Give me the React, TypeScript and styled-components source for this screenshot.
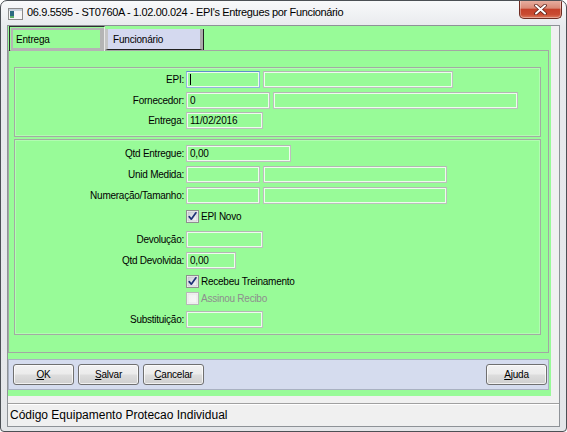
import React from "react";
import styled, { createGlobalStyle } from "styled-components";

const GREEN = "#98fb98";

const Global = createGlobalStyle`
  html, body { margin: 0; padding: 0; background: #ffffff; }
  body { width: 567px; height: 432px; overflow: hidden; font-family: "Liberation Sans", Arial, sans-serif; color: #000; }
  * { box-sizing: border-box; }
`;

const Window = styled.div`
  width: 567px;
  height: 432px;
  border: 1px solid #4c5055;
  border-radius: 7px 7px 4px 4px;
  background: linear-gradient(to bottom, #f8f9fa 0px, #e8eaed 26px, #e4e6e9 100%);
  display: flex;
  flex-direction: column;
  overflow: hidden;
`;

const TitleBar = styled.div`
  height: 24px;
  flex-shrink: 0;
  display: flex;
  align-items: flex-start;
  padding-left: 7px;
`;

const AppIcon = styled.svg`
  margin-top: 7px;
  flex-shrink: 0;
`;

const Title = styled.div`
  margin-left: 4px;
  margin-top: 5px;
  font-size: 11px;
  letter-spacing: -0.35px;
  white-space: nowrap;
  color: #000;
`;

const CloseButton = styled.div`
  margin-left: auto;
  margin-right: 4px;
  margin-top: -1px;
  width: 43px;
  height: 19px;
  border: 1px solid #6e2c22;
  border-top: none;
  border-radius: 0 0 5px 5px;
  background: linear-gradient(to bottom, #e9b2a4 0%, #d98a77 45%, #c5412a 52%, #c94b31 80%, #dc7a5f 100%);
  box-shadow: inset 0 0 0 1px rgba(255, 255, 255, 0.35);
  display: flex;
  align-items: center;
  justify-content: center;
`;

const Client = styled.div`
  margin: 0 6px 4px 6px;
  flex: 1;
  min-height: 0;
  border: 1px solid #8e9297;
  background: #f0f0f0;
  display: flex;
  flex-direction: column;
`;

const GreenArea = styled.div`
  width: 543px;
  height: 370px;
  flex-shrink: 0;
  background: ${GREEN};
  display: flex;
  flex-direction: column;
`;

const TabStrip = styled.div`
  height: 24px;
  display: flex;
  align-items: flex-start;
  padding-left: 1px;
`;

const ActiveTab = styled.div`
  width: 96px;
  height: 25px;
  border-left: 1px solid #2f2f2f;
  border-top: 1px solid #2f2f2f;
  border-right: 1px solid #e8e8e8;
  padding: 1px 0 0 1px;
  position: relative;
  z-index: 1;
`;

const ActiveTabFace = styled.div`
  height: 100%;
  border: 2px solid #b4b4b4;
  border-right-width: 4px;
  border-bottom-width: 3px;
  background: ${GREEN};
  font-size: 10px;
  letter-spacing: -0.2px;
  padding-left: 3px;
  display: flex;
  align-items: center;
`;

const Tab = styled.div`
  margin-top: 3px;
  width: 98px;
  height: 21px;
  background: #d4d9ef;
  border-left: 3px solid #c4c4c4;
  border-right: 3px solid #aaaaaa;
  border-bottom: 1px solid #202020;
  box-shadow: 1px 0 0 #202020;
  font-size: 10px;
  letter-spacing: -0.2px;
  padding-left: 5px;
  display: flex;
  align-items: center;
`;

const Page = styled.div`
  width: 541px;
  height: 303px;
  border: 1px solid #a3a7a3;
  padding: 16px 7px 0 5px;
  display: flex;
  flex-direction: column;
  gap: 2px;
`;

const Group = styled.div<{ $h: number; $pt: number }>`
  height: ${(p) => p.$h}px;
  border: 1px solid #a3aaa3;
  box-shadow: inset 0 0 0 1px rgba(255, 255, 255, 0.25);
  padding-top: ${(p) => p.$pt}px;
  display: flex;
  flex-direction: column;
`;

const Row = styled.div<{ $mt: number }>`
  height: 17px;
  margin-top: ${(p) => p.$mt}px;
  display: flex;
  align-items: center;
`;

const Label = styled.div`
  width: 169px;
  margin-right: 2px;
  text-align: right;
  font-size: 10px;
  letter-spacing: -0.25px;
  color: #000;
  white-space: nowrap;
`;

const Field = styled.div<{ $w: number; $ml?: number; $focused?: boolean }>`
  width: ${(p) => p.$w}px;
  height: 17px;
  margin-left: ${(p) => p.$ml ?? 0}px;
  border: 1px solid ${(p) => (p.$focused ? "#8fb3de" : "#bdbfbd")};
  border-top-color: ${(p) => (p.$focused ? "#5d8fcc" : "#b4b6b4")};
  box-shadow: inset 0 0 0 1px #eefcee;
  background: ${GREEN};
  font-size: 10px;
  letter-spacing: -0.2px;
  padding-left: 3px;
  display: flex;
  align-items: center;
  white-space: nowrap;
`;

const Caret = styled.span`
  display: block;
  width: 1px;
  height: 11px;
  background: #000;
`;

const CheckRow = styled.div<{ $mt: number }>`
  height: 17px;
  margin-top: ${(p) => p.$mt}px;
  padding-left: 171px;
  display: flex;
  align-items: center;
  gap: 2px;
`;

const CheckText = styled.span<{ $disabled?: boolean }>`
  font-size: 10px;
  letter-spacing: -0.25px;
  color: ${(p) => (p.$disabled ? "#8e8e8e" : "#000")};
  white-space: nowrap;
`;

const ButtonBar = styled.div`
  margin-top: 6px;
  width: 541px;
  height: 31px;
  background: #d5dcee;
  border: 1px solid #a9b1c1;
  padding: 4px 1px 0 4px;
  display: flex;
  align-items: flex-start;
  gap: 4px;
`;

const Button = styled.div<{ $right?: boolean }>`
  width: 61px;
  height: 21px;
  margin-left: ${(p) => (p.$right ? "auto" : "0")};
  border: 1px solid #707070;
  border-radius: 3px;
  background: linear-gradient(to bottom, #f2f2f2 0%, #ebebeb 48%, #dddddd 52%, #cfcfcf 100%);
  box-shadow: inset 0 0 0 1px rgba(255, 255, 255, 0.7);
  font-size: 10px;
  letter-spacing: -0.2px;
  display: flex;
  align-items: center;
  justify-content: center;
  color: #000;
`;

const Key = styled.span`
  text-decoration: underline;
`;

const StatusBar = styled.div`
  margin-top: 7px;
  flex: 1;
  border-top: 1px solid #a0a0a0;
  box-shadow: inset 0 1px 0 #ffffff;
  display: flex;
  align-items: center;
  padding-left: 2px;
  font-size: 12px;
  color: #000;
  white-space: nowrap;
`;

const CheckSvg = ({ checked, disabled }: { checked?: boolean; disabled?: boolean }) => (
  <svg width="13" height="13" viewBox="0 0 13 13">
    <defs>
      <linearGradient id={disabled ? "cbd" : "cbg"} x1="0" y1="0" x2="1" y2="1">
        <stop offset="0" stopColor={disabled ? "#f0f0f0" : "#cbd0d6"} />
        <stop offset="1" stopColor={disabled ? "#f7f7f7" : "#f7f7f7"} />
      </linearGradient>
    </defs>
    <rect x="0.5" y="0.5" width="12" height="12" fill="#f4f4f4" stroke={disabled ? "#b8b8b8" : "#8e8f8f"} />
    <rect x="2" y="2" width="9" height="9" fill={`url(#${disabled ? "cbd" : "cbg"})`} stroke={disabled ? "#e0e0e0" : "#b8bcc2"} strokeWidth="0.6" />
    {checked && (
      <path d="M3.2 6.6 L5.3 9.2 L9.9 2.8" fill="none" stroke="#1e3276" strokeWidth="1.7" strokeLinecap="round" strokeLinejoin="round" />
    )}
  </svg>
);

export default function App() {
  return (
    <>
      <Global />
      <Window>
        <TitleBar>
          <AppIcon width="15" height="12" viewBox="0 0 15 12">
            <rect x="0.5" y="0.5" width="14" height="11" fill="#f6f6f6" stroke="#8c8c8c" />
            <rect x="1" y="1" width="13" height="2" fill="#c9d3dc" />
            <rect x="2" y="3" width="4" height="7" fill="#2c6b80" />
            <rect x="2" y="8" width="4" height="2" fill="#5fb06a" />
          </AppIcon>
          <Title>06.9.5595 - ST0760A - 1.02.00.024 - EPI's Entregues por Funcionário</Title>
          <CloseButton>
            <svg width="13" height="11" viewBox="0 0 13 11">
              <path d="M2 1.5 L11 9.5 M11 1.5 L2 9.5" stroke="#5a2018" strokeWidth="3.6" strokeLinecap="round" />
              <path d="M2 1.5 L11 9.5 M11 1.5 L2 9.5" stroke="#ffffff" strokeWidth="2" strokeLinecap="round" />
            </svg>
          </CloseButton>
        </TitleBar>
        <Client>
          <GreenArea>
            <TabStrip>
              <ActiveTab>
                <ActiveTabFace>Entrega</ActiveTabFace>
              </ActiveTab>
              <Tab>Funcionário</Tab>
            </TabStrip>
            <Page>
              <Group $h={70} $pt={3}>
                <Row $mt={0}>
                  <Label>EPI:</Label>
                  <Field $w={74} $focused>
                    <Caret />
                  </Field>
                  <Field $w={190} $ml={3} />
                </Row>
                <Row $mt={4}>
                  <Label>Fornecedor:</Label>
                  <Field $w={84}>0</Field>
                  <Field $w={245} $ml={3} />
                </Row>
                <Row $mt={3}>
                  <Label>Entrega:</Label>
                  <Field $w={77}>11/02/2016</Field>
                </Row>
              </Group>
              <Group $h={196} $pt={5}>
                <Row $mt={0}>
                  <Label>Qtd Entregue:</Label>
                  <Field $w={105}>0,00</Field>
                </Row>
                <Row $mt={4}>
                  <Label>Unid Medida:</Label>
                  <Field $w={74} />
                  <Field $w={184} $ml={3} />
                </Row>
                <Row $mt={4}>
                  <Label>Numeração/Tamanho:</Label>
                  <Field $w={74} />
                  <Field $w={184} $ml={3} />
                </Row>
                <CheckRow $mt={4}>
                  <CheckSvg checked />
                  <CheckText>EPI Novo</CheckText>
                </CheckRow>
                <Row $mt={6}>
                  <Label>Devolução:</Label>
                  <Field $w={77} />
                </Row>
                <Row $mt={4}>
                  <Label>Qtd Devolvida:</Label>
                  <Field $w={50}>0,00</Field>
                </Row>
                <CheckRow $mt={4}>
                  <CheckSvg checked />
                  <CheckText>Recebeu Treinamento</CheckText>
                </CheckRow>
                <CheckRow $mt={0}>
                  <CheckSvg disabled />
                  <CheckText $disabled>Assinou Recibo</CheckText>
                </CheckRow>
                <Row $mt={4}>
                  <Label>Substituição:</Label>
                  <Field $w={77} />
                </Row>
              </Group>
            </Page>
            <ButtonBar>
              <Button>
                <Key>O</Key>K
              </Button>
              <Button>
                <Key>S</Key>alvar
              </Button>
              <Button>
                <Key>C</Key>ancelar
              </Button>
              <Button $right>
                <Key>A</Key>juda
              </Button>
            </ButtonBar>
          </GreenArea>
          <StatusBar>Código Equipamento Protecao Individual</StatusBar>
        </Client>
      </Window>
    </>
  );
}
